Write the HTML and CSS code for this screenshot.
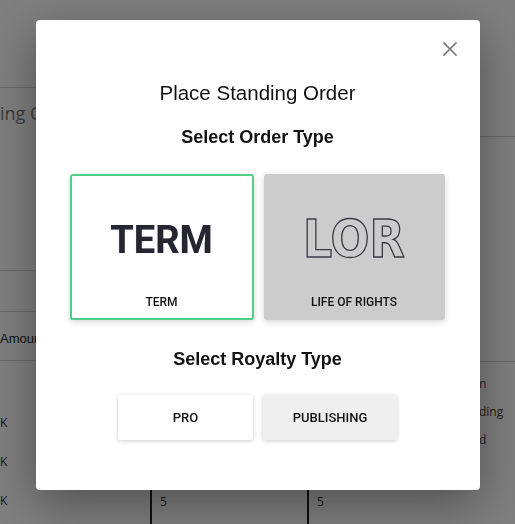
FILE: index.html
```html
<!DOCTYPE html>
<html lang="en">
<head>
<meta charset="utf-8">
<title>Place Standing Order</title>
<link rel="stylesheet" href="styles.css">
</head>
<body>
<div class="page">
  <div class="col c1">
    <div class="cell h-top"></div>
    <div class="cell h-title"><span class="pg-title">ing Orders</span></div>
    <div class="cell h-blank"></div>
    <div class="cell h-amount">Amount</div>
    <div class="rows rows-left">
      <div class="row">K</div>
      <div class="row">K</div>
      <div class="row">K</div>
    </div>
  </div>
  <div class="col c2">
    <div class="spacer"></div>
    <div class="foot">5</div>
  </div>
  <div class="col c3">
    <div class="spacer"></div>
    <div class="foot">5</div>
  </div>
  <div class="col c4">
    <div class="cell h-r1"></div>
    <div class="cell h-r2"></div>
    <div class="rows rows-right">
      <div class="row">n</div>
      <div class="row">ding</div>
      <div class="row">d</div>
    </div>
  </div>
</div>

<div class="overlay">
  <div class="modal">
    <div class="modal-head">
      <button class="close" aria-label="Close">
        <svg width="14" height="14" viewBox="0 0 14 14"><path d="M1 1 L13 13 M13 1 L1 13" stroke="#7a7a7a" stroke-width="1.7" fill="none" stroke-linecap="square"/></svg>
      </button>
    </div>
    <h1 class="title">Place Standing Order</h1>
    <h2 class="subtitle">Select Order Type</h2>
    <div class="cards">
      <div class="card card-term">
        <div class="card-art"><span class="term-logo">TERM</span></div>
        <div class="card-label">TERM</div>
      </div>
      <div class="card card-lor">
        <div class="card-art"><span class="lor-logo">LOR</span></div>
        <div class="card-label">LIFE OF RIGHTS</div>
      </div>
    </div>
    <h2 class="subtitle royalty">Select Royalty Type</h2>
    <div class="buttons">
      <button class="opt opt-pro">PRO</button>
      <button class="opt opt-pub">PUBLISHING</button>
    </div>
  </div>
</div>
</body>
</html>
```

FILE: styles.css
```css
* { box-sizing: border-box; }
html, body { margin: 0; padding: 0; }
body {
  width: 515px;
  height: 524px;
  overflow: hidden;
  background: #ffffff;
  font-family: "Open Sans", "Liberation Sans", sans-serif;
}

/* background page */
.page {
  display: flex;
  height: 524px;
}
.col { display: flex; flex-direction: column; }
.c1 { width: 150px; }
.c2 { width: 157px; }
.c3 { width: 172px; }
.c4 { width: 36px; }

.cell { border-bottom: 1px solid #d6d6d6; }
.h-top { height: 88px; }
.h-title { height: 183px; padding-top: 13px; }
.pg-title { font-size: 18px; line-height: 24px; color: #7a7a7a; white-space: nowrap; }
.h-blank { height: 41px; }
.h-amount {
  height: 49px;
  padding-top: 4px;
  display: flex;
  align-items: center;
  font-family: "Liberation Sans", sans-serif;
  font-size: 13px;
  color: #2a2a2a;
}
.rows-left { padding-top: 42px; }
.rows .row { height: 39px; display: flex; align-items: center; font-size: 12px; color: #333; }
.h-r1 { height: 137px; }
.h-r2 { height: 225px; }
.rows-right { padding-top: 7px; }
.rows-right .row { height: 28px; color: #444; }

.spacer { height: 490px; }
.foot {
  flex: 1;
  border-left: 2px solid #222;
  padding-left: 8px;
  font-size: 12px;
  line-height: 24px;
  color: #383838;
}

/* overlay + modal */
.overlay {
  position: fixed;
  inset: 0;
  background: rgba(0, 0, 0, 0.5);
  display: flex;
  justify-content: center;
  align-items: flex-start;
  padding-top: 20px;
}
.modal {
  width: 444px;
  height: 470px;
  background: #fff;
  border-radius: 4px;
  box-shadow: 0 14px 50px rgba(0, 0, 0, 0.38);
  display: flex;
  flex-direction: column;
  align-items: center;
  font-family: "Liberation Sans", Arial, sans-serif;
  color: #111;
}
.modal-head {
  align-self: stretch;
  display: flex;
  justify-content: flex-end;
  padding: 22px 23px 0 0;
}
.close {
  width: 14px;
  height: 14px;
  padding: 0;
  border: 0;
  background: none;
  display: block;
}
.close svg { display: block; }

.title {
  margin: 25px 0 0;
  font-size: 20.5px;
  line-height: 24px;
  font-weight: 400;
  color: #111;
}
.subtitle {
  margin: 21px 0 0;
  font-size: 18px;
  line-height: 22px;
  font-weight: 700;
  color: #111;
}
.cards {
  margin-top: 26px;
  align-self: stretch;
  padding: 0 0 0 34px;
  display: grid;
  grid-template-columns: 184px 181px;
  gap: 10px;
}
.card {
  height: 146px;
  border-radius: 3px;
  display: flex;
  flex-direction: column;
  padding: 12px 0 10px;
  box-shadow: 0 2px 6px rgba(0, 0, 0, 0.16);
}
.card-term {
  border: 2px solid #52ce88;
  background: #fff;
  padding: 10px 0 8px;
}
.card-lor { background: #cccccc; }
.card-art {
  flex: 1;
  display: flex;
  align-items: center;
  justify-content: center;
}
.term-logo {
  font-family: Roboto, "Liberation Sans", sans-serif;
  font-weight: 700;
  font-size: 38px;
  line-height: 1;
  color: #252630;
  text-shadow: 0 0 1px rgba(37, 38, 48, 0.35);
}
.lor-logo {
  font-family: "DejaVu Sans Condensed", "DejaVu Sans", sans-serif;
  font-stretch: condensed;
  font-weight: 700;
  font-size: 51px;
  line-height: 1;
  color: #cccccc;
  -webkit-text-stroke: 1.3px #3a3b44;
  margin-top: -2px;
}
.card-label {
  text-align: center;
  font-family: Roboto, "Liberation Sans", sans-serif;
  font-weight: 500;
  font-size: 12px;
  line-height: 16px;
  color: #111;
}
.royalty { margin-top: 28px; }
.buttons {
  margin-top: 25px;
  display: flex;
  gap: 10px;
}
.opt {
  width: 135px;
  height: 45px;
  border: 0;
  border-radius: 2px;
  font-family: Roboto, "Liberation Sans", sans-serif;
  font-weight: 500;
  font-size: 13px;
  color: #111;
  box-shadow: 0 1px 4px rgba(0, 0, 0, 0.2);
}
.opt-pro { background: #fff; }
.opt-pub { background: #efefef; width: 134px; }
```
